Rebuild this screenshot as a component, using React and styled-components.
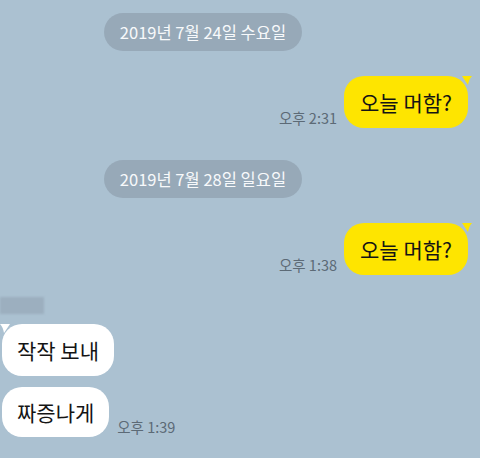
import React from "react";
import styled, { createGlobalStyle } from "styled-components";

const GlobalStyle = createGlobalStyle`
  html, body {
    margin: 0;
    padding: 0;
    background: #abc1d1;
  }
  body {
    font-family: "Noto Sans CJK KR", "Noto Sans", sans-serif;
  }
`;

const Chat = styled.div`
  width: 480px;
  height: 458px;
  overflow: hidden;
  background: #abc1d1;
  display: flex;
  flex-direction: column;
  padding-top: 13px;
  box-sizing: border-box;
`;

const DateRow = styled.div`
  display: flex;
  padding-left: 104px;
  margin-bottom: ${(p) => p.$gap}px;
`;

const DatePill = styled.div`
  height: 38px;
  width: 198px;
  border-radius: 19px;
  background: #97a9b8;
  color: #f7f9fb;
  font-size: 16.5px;
  display: flex;
  align-items: center;
  justify-content: center;
`;

const Row = styled.div`
  display: flex;
  align-items: flex-end;
  justify-content: ${(p) => (p.$mine ? "flex-end" : "flex-start")};
  gap: ${(p) => (p.$mine ? 7 : 8)}px;
  padding: ${(p) => (p.$mine ? "0 12px 0 0" : "0 0 0 2px")};
  margin-bottom: ${(p) => p.$gap}px;
`;

const Time = styled.span`
  font-size: 14.5px;
  color: #5c6a76;
  line-height: 1;
  margin-bottom: 3px;
  white-space: nowrap;
`;

const Bubble = styled.div`
  position: relative;
  height: ${(p) => p.$h || 52}px;
  box-sizing: border-box;
  padding: 0 ${(p) => (p.$mine ? 16 : 15)}px;
  display: flex;
  align-items: center;
  border-radius: 20px;
  background: ${(p) => (p.$mine ? "#fee500" : "#ffffff")};
  color: #141414;
  font-size: 21px;
  white-space: nowrap;
`;

const Tail = styled.svg`
  position: absolute;
  top: 0;
  ${(p) => (p.$mine ? "right: -4px;" : "left: -2px;")}
  width: 10px;
  height: 9px;
`;

const Sender = styled.div`
  width: 44px;
  height: 17px;
  margin-top: 1px;
  margin-bottom: 10px;
  background: #9cafbf;
  filter: blur(1.2px);
`;

const MyTail = () => (
  <Tail $mine viewBox="0 0 10 9">
    <path d="M0 0 L10 0 Q7 3 6 9 Z" fill="#fee500" />
  </Tail>
);

const OtherTail = () => (
  <Tail viewBox="0 0 10 9">
    <path d="M10 0 L0 0 Q3 3 4 9 Z" fill="#ffffff" />
  </Tail>
);

const App = () => {
  return (
    <>
      <GlobalStyle />
      <Chat>
        <DateRow $gap={25}>
          <DatePill>2019년 7월 24일 수요일</DatePill>
        </DateRow>
        <Row $mine $gap={32}>
          <Time>오후 2:31</Time>
          <Bubble $mine>
            오늘 머함?
            <MyTail />
          </Bubble>
        </Row>
        <DateRow $gap={25}>
          <DatePill>2019년 7월 28일 일요일</DatePill>
        </DateRow>
        <Row $mine $gap={21}>
          <Time>오후 1:38</Time>
          <Bubble $mine>
            오늘 머함?
            <MyTail />
          </Bubble>
        </Row>
        <Sender />
        <Row $gap={11}>
          <Bubble>
            작작 보내
            <OtherTail />
          </Bubble>
        </Row>
        <Row $gap={0}>
          <Bubble $h={50}>짜증나게</Bubble>
          <Time>오후 1:39</Time>
        </Row>
      </Chat>
    </>
  );
};

export default App;
